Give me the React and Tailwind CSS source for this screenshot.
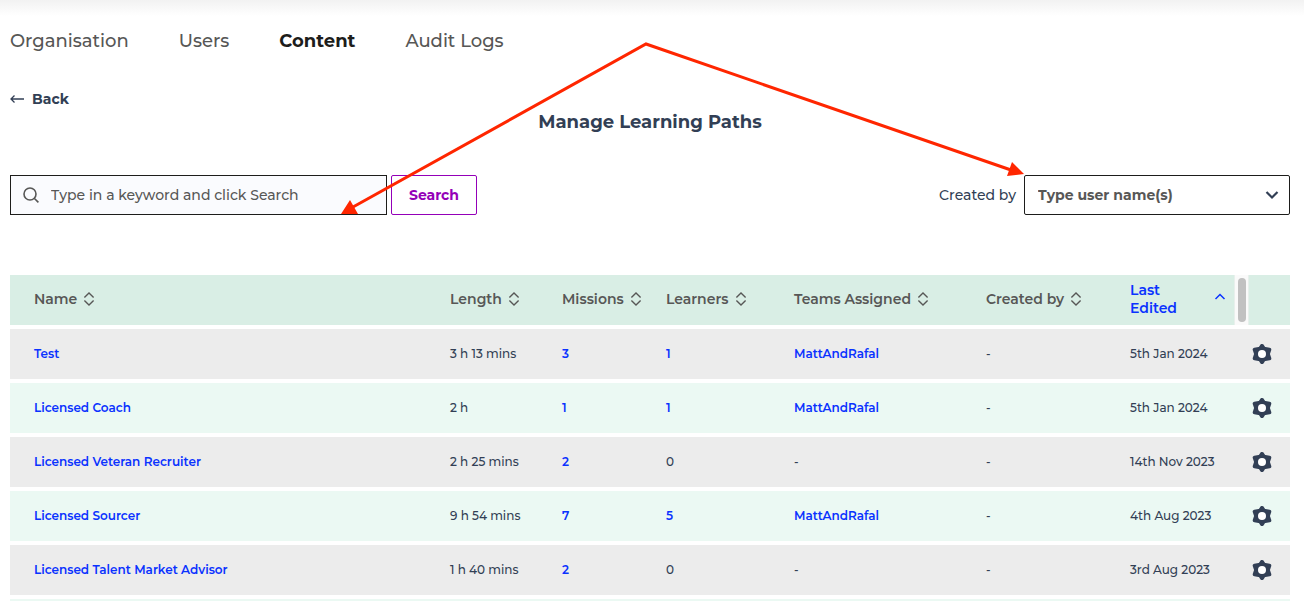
import React from "react";

const tabs = [
  { name: "Organisation" },
  { name: "Users" },
  { name: "Content", active: true },
  { name: "Audit Logs" },
];

const columns = [
  { label: "Name" },
  { label: "Length", width: "w-[112px]" },
  { label: "Missions", width: "w-[104px]" },
  { label: "Learners", width: "w-[128px]" },
  { label: "Teams Assigned", width: "w-[192px]" },
  { label: "Created by", width: "w-[144px]" },
];

const paths = [
  { name: "Test", length: "3 h 13 mins", missions: 3, learners: 1, team: "MattAndRafal", edited: "5th Jan 2024" },
  { name: "Licensed Coach", length: "2 h", missions: 1, learners: 1, team: "MattAndRafal", edited: "5th Jan 2024" },
  { name: "Licensed Veteran Recruiter", length: "2 h 25 mins", missions: 2, learners: 0, edited: "14th Nov 2023" },
  { name: "Licensed Sourcer", length: "9 h 54 mins", missions: 7, learners: 5, team: "MattAndRafal", edited: "4th Aug 2023" },
  { name: "Licensed Talent Market Advisor", length: "1 h 40 mins", missions: 2, learners: 0, edited: "3rd Aug 2023" },
];

const SortIcon = () => (
  <svg width="12" height="14" viewBox="0 0 12 14" fill="none" stroke="currentColor" strokeWidth="1.4" className="shrink-0">
    <path d="M1.4 5.4 6 1 10.6 5.4M1.4 8.6 6 13 10.6 8.6" />
  </svg>
);

const GearIcon = () => (
  <svg width="20" height="20" viewBox="0 0 20 20" fill="#323f55">
    <circle cx="10" cy="10" r="7.6" />
    <path
      d="M10 2 11.8 4.6 17.3 5.6 15.8 10 17.3 14.4 11.8 15.4 10 18 8.2 15.4 2.7 14.4 4.2 10 2.7 5.6 8.2 4.6Z"
      stroke="#323f55"
      strokeWidth="4"
      strokeLinejoin="round"
    />
    <circle cx="10" cy="10" r="4" fill="#fff" />
  </svg>
);

// Red pointer lines from the top of the page to the two filters
const Pointers = () => (
  <svg
    width="1304"
    height="230"
    viewBox="0 0 1304 230"
    className="absolute top-0 left-0 pointer-events-none"
    aria-hidden="true"
  >
    <path d="M353 207 646 44 1011 170" fill="none" stroke="#ff2600" strokeWidth="3" />
    <path d="M341 214 350 200 358 214ZM1024 174 1012 162 1007 176Z" fill="#ff2600" />
  </svg>
);

const CellLink = ({ children }) => (
  <a href="#" className="font-semibold text-[#0a32ff]">
    {children}
  </a>
);

const PathRow = ({ path }) => (
  <tr className="h-[50px] odd:bg-[#ececec] even:bg-[#ebf9f3]">
    <td className="pl-6">
      <CellLink>{path.name}</CellLink>
    </td>
    <td className="pl-6">{path.length}</td>
    <td className="pl-6">
      <CellLink>{path.missions}</CellLink>
    </td>
    <td className="pl-6">
      {path.learners > 0 ? <CellLink>{path.learners}</CellLink> : path.learners}
    </td>
    <td className="pl-6">{path.team ? <CellLink>{path.team}</CellLink> : "-"}</td>
    <td className="pl-6">-</td>
    <td className="pl-6">{path.edited}</td>
    <td>
      <button aria-label={`Settings for ${path.name}`} className="flex mx-auto">
        <GearIcon />
      </button>
    </td>
  </tr>
);

const App = () => {
  return (
    <div className="relative h-screen overflow-hidden bg-white pl-[10px] pr-[14px] font-['Montserrat','Inter',sans-serif] font-medium text-[#323f55]">
      <div className="-ml-[10px] -mr-[14px] h-4 bg-linear-to-b from-[#f2f2f2] to-white" />

      <nav className="flex gap-[50px] mt-[11px] text-lg leading-7 text-[#575756]">
        {tabs.map((tab) => (
          <a key={tab.name} href="#" className={tab.active ? "font-bold text-[#1d1d1b]" : ""}>
            {tab.name}
          </a>
        ))}
      </nav>

      <a href="#" className="flex w-fit items-center gap-2 mt-[34px] text-sm leading-5 font-bold">
        <svg width="14" height="10" viewBox="0 0 14 10" fill="none" stroke="currentColor" strokeWidth="1.3">
          <path d="M14 5H1M4.5 1.5 1 5 4.5 8.5" />
        </svg>
        Back
      </a>

      <h1 className="mt-px text-center text-lg leading-6 font-bold">Manage Learning Paths</h1>

      <div className="flex items-center justify-between mt-[41px]">
        <form className="flex gap-1" onSubmit={(e) => e.preventDefault()}>
          <label className="flex items-center gap-3 w-[377px] h-10 px-3 border border-[#1d1d1b] bg-[#fafbfe] text-[#575756]">
            <svg width="16" height="16" viewBox="0 0 16 16" fill="none" stroke="currentColor" strokeWidth="1.6" className="shrink-0">
              <circle cx="7" cy="7" r="6" />
              <path d="m11.2 11.2 4.2 4.2" />
            </svg>
            <input
              type="text"
              aria-label="Search keyword"
              placeholder="Type in a keyword and click Search"
              className="w-full text-sm font-medium outline-none placeholder:text-[#575756]"
            />
          </label>
          <button type="submit" className="w-[86px] h-10 rounded-xs border border-[#9400b8] text-sm font-bold text-[#9400b8]">
            Search
          </button>
        </form>

        <div className="flex items-center gap-2">
          <label htmlFor="created-by" className="text-sm">
            Created by
          </label>
          <div className="relative">
            <select
              id="created-by"
              className="w-[266px] h-10 appearance-none rounded-xs border border-[#1d1d1b] bg-white px-[13px] text-sm font-bold text-[#575756]"
            >
              <option>Type user name(s)</option>
            </select>
            <svg
              width="14"
              height="10"
              viewBox="0 0 14 10"
              fill="none"
              stroke="currentColor"
              strokeWidth="2.2"
              className="absolute right-[11px] top-[15px] pointer-events-none"
            >
              <path d="M1.5 2 7 7.5 12.5 2" />
            </svg>
          </div>
        </div>
      </div>

      <table className="w-full mt-14 table-fixed border-separate border-spacing-x-0 border-spacing-y-1 text-left text-xs">
        <thead>
          <tr className="h-[50px] bg-[#d9eee5] text-sm leading-[18px] text-[#575756]">
            {columns.map((col) => (
              <th key={col.label} className={`pl-6 pb-0.5 font-semibold ${col.width || ""}`}>
                <button className="flex items-center gap-1.5 whitespace-nowrap">
                  {col.label}
                  <SortIcon />
                </button>
              </th>
            ))}
            <th className="w-[128px] pl-6 pr-2 pb-0.5 font-semibold text-[#0a32ff]">
              <button className="flex w-full items-center justify-between text-left">
                <span className="w-min">Last Edited</span>
                <svg width="12" height="18" viewBox="0 0 12 18" fill="none" stroke="currentColor" strokeWidth="1.5">
                  <path d="M1.5 9 6 4.5 10.5 9" />
                </svg>
              </button>
            </th>
            <th className="w-[56px]" aria-label="Actions">
              <div className="flex w-[15px] h-[50px] justify-center border-x border-[#e8f0ec] bg-[#fafafa] py-[3px]">
                <div className="w-2 rounded-full bg-[#c1c1c1]" />
              </div>
            </th>
          </tr>
        </thead>
        <tbody>
          {paths.map((path) => (
            <PathRow key={path.name} path={path} />
          ))}
          <tr className="h-[50px] bg-[#ebf9f3]">
            <td colSpan={8} />
          </tr>
        </tbody>
      </table>

      <Pointers />
    </div>
  );
};

export default App;
